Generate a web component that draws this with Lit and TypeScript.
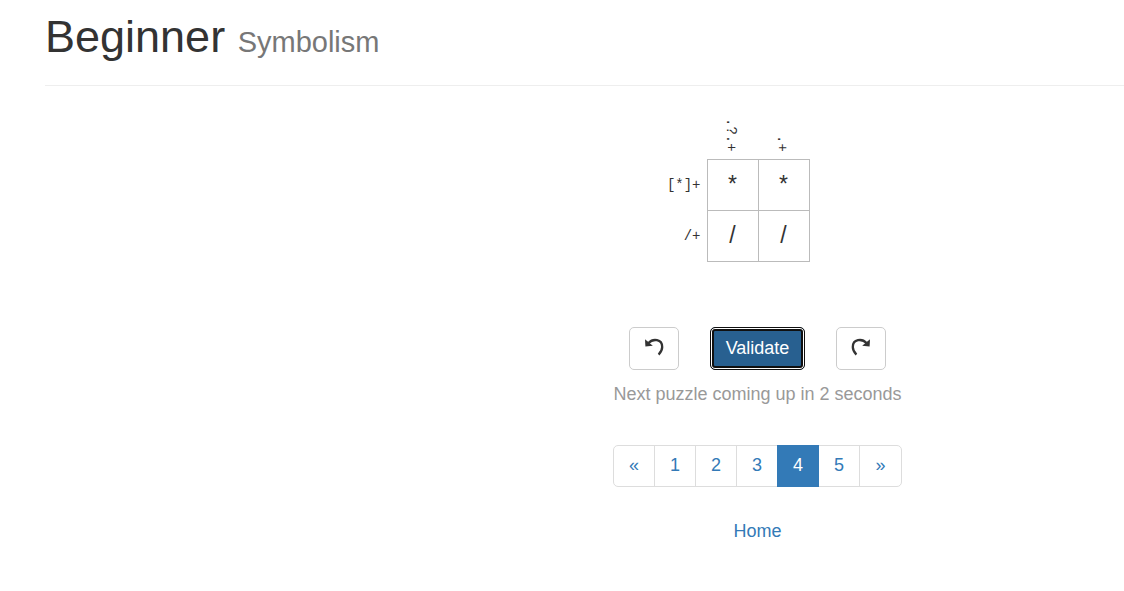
import { LitElement, html, css, svg } from "lit";
import { customElement, state } from "lit/decorators.js";

const ARC = svg`
  <path d="M4.5 5 C9 0.2 18.2 1 18.2 9 C18.2 12.2 16.8 14.4 14.6 16.6" fill="none" stroke="currentColor" stroke-width="2.3"/>
  <path d="M1 1.2 L1.4 8.4 L8.8 7.8 Z" fill="currentColor"/>
`;

@customElement("app-root")
export class AppRoot extends LitElement {
  static styles = css`
    :host {
      display: block;
      overflow: hidden;
      padding-left: 45px;
      background: #fff;
      color: #333;
      font: 18px/26px "Liberation Sans", Arial, sans-serif;
    }
    .header {
      padding: 12px 0 23px;
      border-bottom: 1px solid #eee;
    }
    h1 {
      margin: 0;
      font-size: 45px;
      line-height: 50px;
      font-weight: 400;
    }
    small {
      font-size: 29px;
      line-height: 1;
      color: #777;
    }
    .puzzle {
      display: flex;
      flex-direction: column;
      align-items: center;
      padding: 24px 0 40px 346px;
    }
    .board {
      display: grid;
      grid-template-columns: 1fr auto auto 1fr;
      width: 100%;
    }
    .clue {
      font: 14px/16px "Liberation Mono", monospace;
    }
    .top {
      grid-row: 1;
      height: 42px;
      justify-self: center;
      writing-mode: vertical-rl;
      text-align: right;
      padding: 0 2px 7px 0;
    }
    .side {
      grid-column: 1;
      align-self: center;
      justify-self: end;
      padding-right: 6px;
    }
    .cell {
      box-sizing: border-box;
      width: 52px;
      height: 52px;
      margin: 0 -1px -1px 0;
      padding: 0 0 2px;
      border: 1px solid #bbb;
      border-radius: 0;
      background: #fff;
      color: #333;
      font: 23px/28px "Liberation Sans", Arial, sans-serif;
      text-align: center;
    }
    .c1 {
      grid-column: 2;
    }
    .c2 {
      grid-column: 3;
    }
    .r1 {
      grid-row: 2;
    }
    .r2 {
      grid-row: 3;
    }
    .actions {
      display: flex;
      gap: 31px;
      margin-top: 66px;
    }
    .btn {
      box-sizing: border-box;
      display: flex;
      align-items: center;
      justify-content: center;
      height: 43px;
      padding: 0 14px 2px;
      border: 1px solid #ccc;
      border-radius: 5px;
      background: #fff;
      color: #333;
      font: inherit;
    }
    .btn svg {
      width: 20px;
      height: 18px;
      margin-bottom: 2px;
    }
    .flip {
      transform: scaleX(-1);
    }
    .primary {
      padding: 0 15px 2px;
      border-color: #101010;
      background: #286090;
      color: #fff;
      box-shadow: inset 0 0 0 1px #fff, inset 0 0 0 3px #101010;
    }
    .status {
      margin: 11px 0 0;
      color: #999;
    }
    .pages {
      display: flex;
      list-style: none;
      margin: 38px 0 0;
      padding: 0;
    }
    .pages a {
      box-sizing: border-box;
      display: block;
      width: 42px;
      height: 42px;
      margin-right: -1px;
      border: 1px solid #ddd;
      line-height: 39px;
      text-align: center;
    }
    .pages li:first-child a {
      border-radius: 5px 0 0 5px;
    }
    .pages li:last-child a {
      width: 43px;
      margin-right: 0;
      border-radius: 0 5px 5px 0;
    }
    .pages .active {
      position: relative;
      border-color: #337ab7;
      background: #337ab7;
      color: #fff;
    }
    a {
      color: #337ab7;
      text-decoration: none;
    }
    .home {
      margin-top: 31px;
    }
  `;

  @state() private page = "4";

  private cell(row: number, col: number, value: string) {
    return html`<input class="cell r${row} c${col}" maxlength="1" aria-label="Row ${row}, column ${col}" .value=${value} />`;
  }

  private go(event: Event, page: string) {
    event.preventDefault();
    if (/\d/.test(page)) this.page = page;
  }

  render() {
    return html`
      <header class="header"><h1>Beginner <small>Symbolism</small></h1></header>
      <main class="puzzle">
        <div class="board">
          <span class="clue top c1">.?.+</span>
          <span class="clue top c2">.+</span>
          <span class="clue side r1">[*]+</span>
          ${this.cell(1, 1, "*")}${this.cell(1, 2, "*")}
          <span class="clue side r2">/+</span>
          ${this.cell(2, 1, "/")}${this.cell(2, 2, "/")}
        </div>
        <div class="actions">
          <button class="btn" aria-label="Undo"><svg viewBox="0 0 20 18">${ARC}</svg></button>
          <button class="btn primary">Validate</button>
          <button class="btn" aria-label="Redo"><svg class="flip" viewBox="0 0 20 18">${ARC}</svg></button>
        </div>
        <p class="status">Next puzzle coming up in 2 seconds</p>
        <ul class="pages">
          ${["«", "1", "2", "3", "4", "5", "»"].map(
            (p) => html`<li><a href="#" class=${p === this.page ? "active" : ""} @click=${(e: Event) => this.go(e, p)}>${p}</a></li>`
          )}
        </ul>
        <a class="home" href="#">Home</a>
      </main>
    `;
  }
}
